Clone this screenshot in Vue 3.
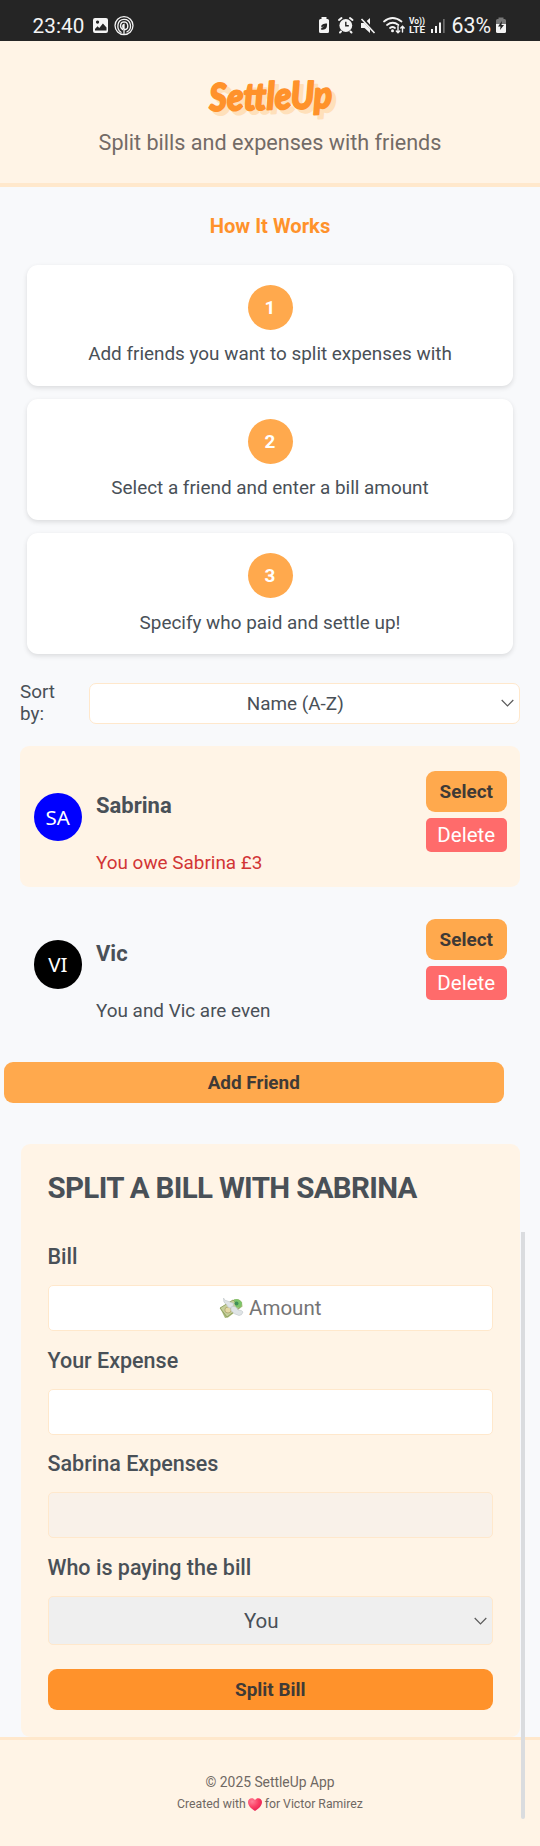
<script setup>
const steps = [
  'Add friends you want to split expenses with',
  'Select a friend and enter a bill amount',
  'Specify who paid and settle up!'
]
const friends = [
  { name: 'Sabrina', initials: 'SA', tone: 'blue', note: 'You owe Sabrina £3', owes: true, selected: true },
  { name: 'Vic', initials: 'VI', tone: 'black', note: 'You and Vic are even', owes: false, selected: false }
]
</script>

<template>
  <div class="page">
    <div class="status">
      <span class="clock">23:40</span>
      <svg class="s-left" width="44" height="22" viewBox="0 0 44 22">
        <path fill="#f4f4f4" fill-rule="evenodd" d="M3 3h11q2 0 2 2v11q0 2-2 2H3q-2 0-2-2V5q0-2 2-2zM5.500 5.500a1.600 1.600 0 1 0 .1 0zM3 15.500h11.500v-3l-3.600-4-3.600 4.500-1.800-1.800L3 14z" />
        <g fill="none" stroke="#f4f4f4" stroke-width="1.300" stroke-linecap="round">
          <circle cx="32" cy="10.600" r="9" />
          <path d="M29 17.300C24 14 25 4.500 32 4.400c7.500 0 8.500 10 3 12.500M30.500 14.500c-3.500-3-2-7.500 1.500-7.600 4.500 0 5 6.800 1.500 7.600-3 .4-3.600-5-1.500-5.200v9.700" />
        </g>
      </svg>
      <svg class="s-right" width="134" height="24" viewBox="0 0 134 24">
        <path fill="#f4f4f4" fill-rule="evenodd" d="M3.500 4V2h5v2h1q1.500 0 1.500 1.500v11q0 1.500-1.500 1.500h-7Q1 18 1 16.500v-11Q1 4 2.500 4zM3 14.500c4.500 1 6.500-1.500 6-6-3.500 0-6.500 1-5.500 4l3-1.800-3.700 3z" />
        <g fill="none" stroke="#f4f4f4" stroke-width="2" stroke-linecap="round">
          <path d="M21 5l2.500-2M34.500 5L32 3M23 16.500l-1 1M32.500 16.500l1 1" />
        </g>
        <circle cx="27.800" cy="10.500" r="6.400" fill="#f4f4f4" />
        <path d="M27.800 6.800v4h3" fill="none" stroke="#252525" stroke-width="1.400" />
        <path d="M43 8h3.500L52 3v15l-5.500-5H43z" fill="#f4f4f4" />
        <path d="M43.500 2.500L57 17.500" stroke="#252525" stroke-width="3.200" />
        <path d="M43.500 4L56.500 18" stroke="#f4f4f4" stroke-width="1.600" />
        <g fill="none" stroke="#f4f4f4" stroke-width="1.700" stroke-linecap="round">
          <path d="M66 6.500Q74.500-.5 83.500 6.500M69 10q5.700-4.500 11.400 0M72 13q2.500-2 5 0" />
          <path stroke-width="1.400" d="M80 11.500v6M78.300 16l1.700 1.800 1.700-1.800M84.500 17v-5.500M82.800 13l1.700-1.800 1.700 1.800" />
        </g>
        <circle cx="74.500" cy="15.800" r="1.500" fill="#f4f4f4" />
        <text x="91" y="9.300" class="lte" textLength="16" lengthAdjust="spacingAndGlyphs">Vo))</text>
        <text x="91" y="18" class="lte" textLength="16" lengthAdjust="spacingAndGlyphs">LTE</text>
        <g fill="#f4f4f4">
          <rect x="113" y="14" width="2" height="4" /><rect x="117" y="11" width="2" height="7" />
          <rect x="121" y="7.500" width="2" height="10.500" /><rect x="125" y="4" width="1.700" height="14" opacity=".35" />
        </g>
      </svg>
      <span class="percent">63%</span>
      <svg class="batt" width="12" height="18" viewBox="0 0 12 18">
        <path d="M3.500 2V.5h5V2h1Q11 2 11 3.500V8H1V3.500Q1 2 2.500 2z" fill="#777" />
        <path d="M1 7h10v7.500q0 1.500-1.500 1.500h-7Q1 16 1 14.500z" fill="#f4f4f4" />
        <path d="M7 4L3 9.500h2.500L5 13l4-5H6.500z" fill="#252525" />
      </svg>
    </div>

    <header class="header">
      <svg class="logo" width="190" height="56" viewBox="-20 0 190 56">
        <g transform="rotate(-1.500 75 35)">
          <text class="logo-shade" x="18.500" y="42.500" textLength="123" lengthAdjust="spacingAndGlyphs">SettleUp</text>
          <text class="logo-text" x="14.500" y="38.500" textLength="123" lengthAdjust="spacingAndGlyphs">SettleUp</text>
        </g>
      </svg>
      <p class="tagline">Split bills and expenses with friends</p>
    </header>

    <main>
      <h2 class="how">How It Works</h2>
      <section class="steps">
        <article v-for="(step, i) in steps" :key="step" class="step">
          <span class="num">{{ i + 1 }}</span>
          <p>{{ step }}</p>
        </article>
      </section>

      <div class="sort">
        <label>Sort by:</label>
        <div class="sort-select">
          <span>Name (A-Z)</span>
          <svg class="chev" width="13" height="8" viewBox="0 0 13 8"><path d="M.7 1l5.800 5.800L12.300 1" /></svg>
        </div>
      </div>

      <ul class="friends">
        <li v-for="f in friends" :key="f.name" class="friend" :class="{ selected: f.selected }">
          <span class="avatar" :class="f.tone">{{ f.initials }}</span>
          <div class="info">
            <h3>{{ f.name }}</h3>
            <p :class="{ red: f.owes }">{{ f.note }}</p>
          </div>
          <div class="actions">
            <button class="btn">Select</button>
            <button class="delete">Delete</button>
          </div>
        </li>
      </ul>

      <button class="btn add">Add Friend</button>

      <form class="form" @submit.prevent>
        <h2>SPLIT A BILL WITH SABRINA</h2>
        <label>Bill</label>
        <div class="field">
          <svg width="25" height="23" viewBox="0 0 25 23">
            <path d="M1 11L15 2.500q5-2 8 3l.5 4L9 20.500 6 21z" fill="#a8b878" />
            <path d="M1 11L14 3l7 7L8 20z" fill="#c5cf9a" stroke="#8a9a5a" stroke-width=".8" />
            <path d="M15 2.500q6-1.500 8 3.500l-1 4-5 1z" fill="#7cc46a" />
            <circle cx="17.500" cy="6.500" r="2" fill="#3f8f57" />
            <ellipse cx="9" cy="13" rx="3.200" ry="3" fill="#e3d9a4" stroke="#a59c66" stroke-width=".7" />
            <path d="M4.500 1q1 3 4 3l6 2.500-1 5q-5 0-6-4Q4 6 4.500 1z" fill="#dfe4e6" stroke="#bfc6ca" stroke-width=".6" />
            <path d="M12 10q5-2 7 3 4 0 5 2-1 3.500-4 3.500-5-1-8-5z" fill="#dfe4e6" stroke="#bfc6ca" stroke-width=".6" />
          </svg>
          <span>Amount</span>
        </div>
        <label>Your Expense</label>
        <div class="field"></div>
        <label>Sabrina Expenses</label>
        <div class="field disabled"></div>
        <label>Who is paying the bill</label>
        <div class="payer">
          <span>You</span>
          <svg class="chev" width="13" height="8" viewBox="0 0 13 8"><path d="M.7 1l5.800 5.800L12.300 1" /></svg>
        </div>
        <button class="btn split">Split Bill</button>
      </form>
    </main>

    <footer class="footer">
      <p class="copy">© 2025 SettleUp App</p>
      <p class="credit">
        <span>Created with</span>
        <svg width="14" height="13" viewBox="0 0 14 13">
          <defs>
            <radialGradient id="heart" cx=".3" cy=".25" r=".9">
              <stop offset="0" stop-color="#ff8098" /><stop offset=".5" stop-color="#fb3f64" /><stop offset="1" stop-color="#e01950" />
            </radialGradient>
          </defs>
          <path fill="url(#heart)" d="M7 13C3 10.500 0 7.500 0 4 0 .3 5-1.200 7 2.200 9-1.200 14 .3 14 4c0 3.500-3 6.500-7 9z" />
        </svg>
        <span>for Victor Ramirez</span>
      </p>
    </footer>

    <div class="scrollbar"></div>
  </div>
</template>

<style>
body { margin: 0; background: #f8f9fa; }
</style>

<style scoped>
* { box-sizing: border-box; }
.page { position: relative; width: 540px; height: 1846px; overflow: hidden; display: flex; flex-direction: column; background: #f8f9fb; color: #495057; font-family: Roboto, "Liberation Sans", sans-serif; font-size: 18.9px; }
h2, h3, p, ul { margin: 0; padding: 0; }
button { font-family: inherit; border: 0; padding: 0; }

.status { flex: none; height: 40.500px; padding-top: 11px; background: #252525; color: #f4f4f4; display: flex; align-items: center; }
.clock { margin-left: 32.500px; width: 52px; font-size: 20.700px; line-height: 30px; letter-spacing: .1px; white-space: nowrap; }
.s-left { margin-left: 7.500px; margin-top: 0; }
.s-right { margin-left: 181.500px; margin-top: 2px; }
.lte { font: 700 8.500px Roboto, sans-serif; fill: #f4f4f4; }
.percent { width: 43px; font-size: 21.300px; white-space: nowrap; }
.batt { margin-left: .5px; margin-top: 1px; }

.header { flex: none; height: 146.500px; background: #fff4e6; border-bottom: 4px solid #ffe8cc; display: flex; flex-direction: column; align-items: center; padding-top: 30.500px; }
.logo { display: block; flex: none; }
.logo-text, .logo-shade { font: italic 900 38px Lato, sans-serif; stroke-linejoin: round; stroke-width: 1.800px; }
.logo-text { fill: #ff922b; stroke: #ff922b; }
.logo-shade { fill: #ffe0ba; stroke: #ffe0ba; }
.tagline { font-size: 21.600px; line-height: 28px; margin-top: 2px; color: #736b66; }

.how { font-size: 20.200px; line-height: 26px; text-align: center; color: #ff922b; margin-top: 26px; }
.steps { display: flex; flex-direction: column; gap: 13.400px; padding: 25.500px 27px 0; }
.step { height: 121px; border-radius: 11px; background: #fff; box-shadow: 0 2px 5px rgba(0, 0, 0, .12); display: flex; flex-direction: column; align-items: center; padding-top: 20px; }
.num { width: 45px; height: 45px; border-radius: 50%; background: #ffa94d; color: #fff; font-weight: 700; display: flex; align-items: center; justify-content: center; }
.step p { line-height: 26px; margin-top: 11.500px; }

.sort { display: flex; align-items: center; padding: 0 20px; margin-top: 25px; height: 48px; }
.sort label { width: 68.500px; padding-right: 20px; line-height: 22px; }
.sort-select { flex: 1; height: 41px; border: 1.500px solid #ffe8cc; border-radius: 7px; background: #fff; display: flex; align-items: center; }
.sort-select span, .payer span { flex: 1; text-align: center; }
.chev { flex: none; margin-right: 5px; }
.chev path { fill: none; stroke: #5a5a5a; stroke-width: 1.200px; }

.friends { list-style: none; margin: 18.500px 20px 0; display: flex; flex-direction: column; gap: 6px; }
.friend { height: 141.500px; border-radius: 9px; display: flex; padding: 25.500px 13.500px 0 13.500px; }
.selected { background: #fff4e6; }
.avatar { width: 48.500px; height: 48.500px; margin-top: 21.300px; border-radius: 50%; color: #fff; font: 20.500px/49px "Noto Sans", sans-serif; text-align: center; }
.blue { background: #00f; }
.black { background: #000; }
.info { flex: 1; margin-left: 14px; }
.info h3 { font-size: 22px; line-height: 28px; margin-top: 21px; }
.info p { line-height: 26px; margin-top: 30px; }
.info .red { color: #d23535; }
.actions { width: 80.500px; display: flex; flex-direction: column; gap: 6px; }
.btn { height: 41px; flex: none; border-radius: 9px; background: #ffa94d; font-size: 18.900px; font-weight: 700; color: #3f3a36; }
.delete { height: 34px; border-radius: 5px; background: #ff6b6b; color: #fff; font-size: 20.500px; }
.add { display: block; width: 499.500px; margin: 27.700px 0 0 4px; }

.form { margin: 41px 20px 0 20.500px; height: 593px; background: #fff4e6; border-radius: 9px; padding: 26px 27px 0 27px; display: flex; flex-direction: column; }
.form h2 { font-size: 29.500px; line-height: 36px; letter-spacing: -.66px; white-space: nowrap; margin-bottom: 36.600px; }
.form label { font-size: 21.500px; font-weight: 500; line-height: 28px; margin-bottom: 14px; }
.field { flex: none; height: 46px; margin-bottom: 15.700px; border: 1.500px solid #ffe8cc; border-radius: 5px; background: #fff; display: flex; align-items: center; justify-content: center; gap: 5px; font-size: 20.500px; color: #757575; }
.disabled { background: #f9f1e9; }
.payer { flex: none; height: 49px; border: 1.500px solid #ffe8cc; border-radius: 5px; background: #efefef; display: flex; align-items: center; font-size: 20.500px; }
.split { margin-top: 24px; background: #ff922b; }

.footer { flex: 1; border-top: 3.500px solid #ffe8cc; background: #fff4e6; color: #6f6863; display: flex; flex-direction: column; align-items: center; padding-top: 31px; }
.copy { font-size: 13.850px; line-height: 22px; }
.credit { font-size: 12.250px; line-height: 22px; display: flex; align-items: center; gap: 2.500px; }
.scrollbar { position: absolute; left: 520.500px; top: 1232px; width: 4.500px; height: 587px; border-radius: 0 0 2px 2px; background: #dadcdf; }
</style>
